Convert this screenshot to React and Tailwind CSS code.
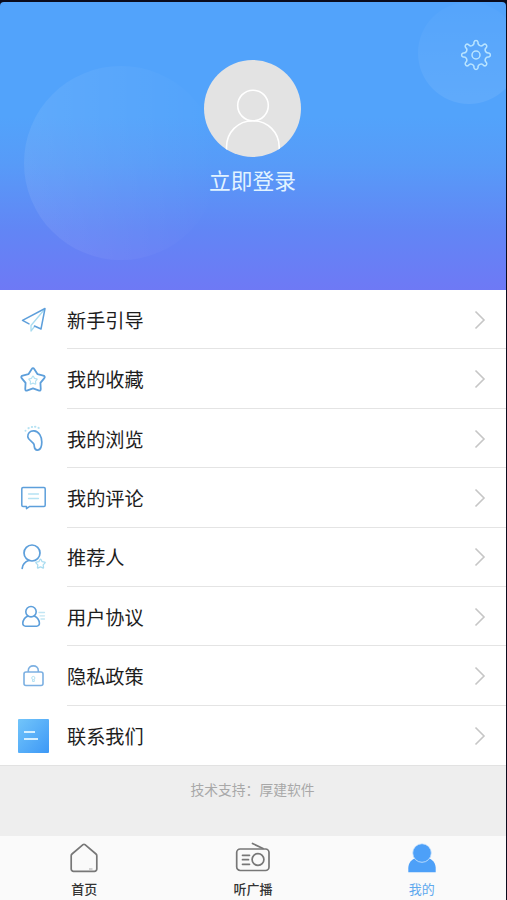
const polar = (cx, cy, r, deg) => {
  const a = ((deg - 90) * Math.PI) / 180;
  return [cx + r * Math.cos(a), cy + r * Math.sin(a)];
};

const mix = (a, b, t) => [a[0] + (b[0] - a[0]) * t, a[1] + (b[1] - a[1]) * t];
const pt = ([x, y]) => `${x.toFixed(2)} ${y.toFixed(2)}`;

// Five-pointed star with softened tips
const starPath = (cx, cy, outer, inner) => {
  let d = '';
  for (let i = 0; i < 5; i++) {
    const tip = polar(cx, cy, outer, i * 72);
    const prev = polar(cx, cy, inner, i * 72 - 36);
    const next = polar(cx, cy, inner, i * 72 + 36);
    d += `${i ? 'L' : 'M'}${pt(mix(tip, prev, 0.3))} Q${pt(tip)} ${pt(mix(tip, next, 0.3))} L${pt(next)} `;
  }
  return `${d}Z`;
};

// Gear with eight round teeth and scalloped gaps
const gearPath = (cx, cy, r) => {
  let d = `M${pt(polar(cx, cy, r, -9))} `;
  for (let i = 0; i < 8; i++) {
    d += `A2.1 2.1 0 0 1 ${pt(polar(cx, cy, r, i * 45 + 9))} `;
    d += `A3.1 3.1 0 0 0 ${pt(polar(cx, cy, r, i * 45 + 36))} `;
  }
  return `${d}Z`;
};

const GuideIcon = () => (
  <svg className="w-9 h-9" viewBox="0 0 36 36" fill="none" strokeLinejoin="round" strokeLinecap="round">
    <path d="M16 23.5V29l3.5-4.5M16 23.5L29 8" stroke="#a9dcf0" strokeWidth="1.3" />
    <path d="M14 21.8L7.5 18.4 30 6.5l-4 20.5-6.5-3" stroke="#5d9fdb" strokeWidth="1.5" />
  </svg>
);

const FavoriteIcon = () => (
  <svg className="w-9 h-9" viewBox="0 0 36 36" fill="none" strokeLinejoin="round">
    <path d={starPath(18, 18.5, 13.4, 7.8)} stroke="#5d9fdb" strokeWidth="1.8" />
    <path d={starPath(18, 18.5, 4.8, 2.6)} stroke="#b5e2f3" strokeWidth="1.2" />
  </svg>
);

const FootprintIcon = () => (
  <svg className="w-9 h-9" viewBox="0 0 36 36" fill="none" strokeLinecap="round">
    <path d="M19 9.9c-4-.3-6.6 2.6-6.2 5.9.4 3.6 5.2 4.7 6.2 7.8.6 2-.2 5.4 3.2 5.5 3.8.1 4.6-4.5 4.6-8.1 0-5.2-2.700-10.800-7.800-11.100z" stroke="#5d9fdb" strokeWidth="1.7" />
    <path d="M10.5 9.7v.1M13.5 7.2l.3-.2M16.8 5.900h.3M20 5.700h.4M23.500 6.800l.3.2" stroke="#b5e2f3" strokeWidth="2" />
  </svg>
);

const CommentIcon = () => (
  <svg className="w-9 h-9" viewBox="0 0 36 36" fill="none" strokeLinejoin="round" strokeLinecap="round">
    <path d="M8 7.5h21a1.2 1.2 0 0 1 1.2 1.2v16.500a1.2 1.2 0 0 1-1.2 1.2H14.7l-3.200 2.200v-2.200H8a1.2 1.2 0 0 1-1.2-1.2V8.7A1.2 1.2 0 0 1 8 7.5z" stroke="#5d9fdb" strokeWidth="1.5" />
    <path d="M13.5 14h10M13.5 18.5h10" stroke="#b5e2f3" strokeWidth="1.3" />
  </svg>
);

const RefereeIcon = () => (
  <svg className="w-9 h-9" viewBox="0 0 36 36" fill="none" strokeLinejoin="round" strokeLinecap="round">
    <circle cx="17" cy="13" r="8" stroke="#5d9fdb" strokeWidth="1.7" />
    <path d="M14 20.300c-3.800 1.400-6.400 3.800-6.800 8" stroke="#5d9fdb" strokeWidth="1.7" />
    <path d={starPath(25.5, 24, 5.4, 2.8)} stroke="#a9dcf0" strokeWidth="1.3" />
  </svg>
);

const AgreementIcon = () => (
  <svg className="w-9 h-9" viewBox="0 0 36 36" fill="none" strokeLinejoin="round" strokeLinecap="round">
    <circle cx="16" cy="12.7" r="5.2" stroke="#5d9fdb" strokeWidth="1.6" />
    <path d="M12.5 17.300c-2.600 1.300-4.400 3.600-4.700 6.700-.1 2 .9 3.200 2.800 3.200h11c1.900 0 2.900-1.200 2.800-3.200-.3-3.100-2.100-5.400-4.700-6.700" stroke="#5d9fdb" strokeWidth="1.6" />
    <path d="M24 13.500h5.500M25 16.800h4.500M26 20h3.500" stroke="#c2e6f4" strokeWidth="1.3" />
  </svg>
);

const PrivacyIcon = () => (
  <svg className="w-9 h-9" viewBox="0 0 36 36" fill="none">
    <rect x="9" y="14" width="19" height="13.500" rx="2" stroke="#7cb0e2" strokeWidth="1.6" />
    <path d="M13.300 14v-1.500c0-2.700 2.200-4.600 5-4.600s5 1.900 5 4.600V14" stroke="#7cb0e2" strokeWidth="1.6" />
    <circle cx="18.3" cy="20" r="1.6" stroke="#b5e2f3" />
    <path d="M17.500 21.500v2h1.800v-2" stroke="#b5e2f3" />
  </svg>
);

const ContactIcon = () => (
  <div className="w-[31px] h-[34px] mx-auto rounded-[1px] bg-gradient-to-br from-[#72c5fa] to-[#3d98f6] flex flex-col justify-center gap-[5px] pl-[6px]">
    <span className="w-[11px] h-[2px] bg-[#d5efff]" />
    <span className="w-[14px] h-[2px] bg-[#d5efff]" />
  </div>
);

const menuItems = [
  { label: '新手引导', Icon: GuideIcon },
  { label: '我的收藏', Icon: FavoriteIcon },
  { label: '我的浏览', Icon: FootprintIcon },
  { label: '我的评论', Icon: CommentIcon },
  { label: '推荐人', Icon: RefereeIcon },
  { label: '用户协议', Icon: AgreementIcon },
  { label: '隐私政策', Icon: PrivacyIcon },
  { label: '联系我们', Icon: ContactIcon },
];

const HomeIcon = () => (
  <svg className="w-9 h-8" viewBox="0 0 36 32" fill="none" stroke="#777" strokeWidth="1.7" strokeLinejoin="round">
    <path d="M17 2.700a1.6 1.6 0 0 1 2 0l11 9.300c.6.500.8 1 .8 1.800V27a2.300 2.300 0 0 1-2.300 2.300h-21A2.300 2.300 0 0 1 5.200 27V13.800c0-.8.2-1.300.8-1.800z" />
    <path d="M23 27h3.500" stroke="#aaa" strokeWidth="1" />
  </svg>
);

const RadioIcon = () => (
  <svg className="w-9 h-8" viewBox="0 0 36 32" fill="none" stroke="#777" strokeWidth="1.7" strokeLinecap="round">
    <rect x="1.7" y="7" width="32.3" height="21.5" rx="3.5" />
    <circle cx="23" cy="17.5" r="5.9" />
    <path d="M17.5 1.5L28 6.500M7.500 13.300h7M7.500 17.700h6M7.500 22.300h7" />
  </svg>
);

const MineIcon = () => (
  <svg className="w-9 h-8" viewBox="0 0 36 32" fill="#4da0f8">
    <path d="M10.5 16.5C6.500 18.300 4.300 22 4.300 26.500v3.700h27.400v-3.700c0-4.500-2.200-8.200-6.200-10z" />
    <circle cx="18" cy="11" r="9.3" stroke="#d3e9fd" strokeWidth=".8" />
  </svg>
);

const tabs = [
  { label: '首页', Icon: HomeIcon },
  { label: '听广播', Icon: RadioIcon },
  { label: '我的', Icon: MineIcon, active: true },
];

const Header = () => (
  <header className="relative h-[288px] shrink-0 overflow-hidden rounded-t-[4px] bg-[linear-gradient(180deg,#52a3fb_0%,#52a3fb_40%,#579bf8_56%,#6285f5_80%,#6e79f5_100%)]">
    <div className="absolute left-[24px] top-[64px] w-[194px] h-[194px] rounded-full bg-gradient-to-r from-white/8 to-white/0" />
    <div className="absolute left-[418px] top-0 w-[102px] h-[102px] rounded-full bg-gradient-to-b from-white/2 to-white/8" />
    <button className="absolute left-[460px] top-[37px]">
      <svg className="w-8 h-8" viewBox="0 0 32 32" fill="none" stroke="#b9e4ff" strokeWidth="1.5" strokeLinejoin="round">
        <path d={gearPath(16, 16, 13)} />
        <circle cx="16" cy="16" r="4" />
      </svg>
    </button>
    <div className="flex flex-col items-center pt-[58px] pr-px relative">
      <svg className="w-[97px] h-[97px] rounded-full bg-[#e3e3e3]" viewBox="0 0 97 97" fill="none" stroke="#fff" strokeWidth="1.6">
        <circle cx="49" cy="45.5" r="15.3" />
        <path d="M22.5 91v-4c0-14.500 11.500-26.300 26.300-26.300S75.200 72.500 75.200 87v4" />
      </svg>
      <span className="mt-[7px] text-[21.7px] leading-8 text-[#e2f3ff]">立即登录</span>
    </div>
  </header>
);

const App = () => {
  return (
    <div className="w-[507px] h-[900px] bg-[#0a0b1c] pt-[2px] pr-px overflow-hidden font-['Noto_Sans_CJK_SC',sans-serif]">
      <div className="h-full flex flex-col">
        <Header />

        <ul className="h-[475px] shrink-0 bg-white flex flex-col">
          {menuItems.map(({ label, Icon }) => (
            <li key={label} className="group flex-1 flex items-center pl-[15px]">
              <div className="w-9 shrink-0 pt-px">
                <Icon />
              </div>
              <div className="flex-1 h-full ml-4 flex items-center justify-between border-b border-[#e4e4e4] group-last:border-transparent pt-[1.5px] pr-[20px]">
                <span className="text-[19.2px] leading-7 text-[#1d1d1d]">{label}</span>
                <svg className="w-3 h-5" viewBox="0 0 12 20" fill="none" stroke="#c6c6c6" strokeWidth="1.6">
                  <path d="M1.500 1.500L10 10l-8.500 8.500" />
                </svg>
              </div>
            </li>
          ))}
        </ul>

        <div className="h-[71px] shrink-0 bg-[#eeeeee] border-t border-[#e2e2e2] pt-[13px] pr-px text-center text-[13.8px] leading-5 text-[#a8a8a8]">
          技术支持：厚建软件
        </div>

        <nav className="flex-1 bg-[#fafafa] grid grid-cols-3 pt-[6px]">
          {tabs.map(({ label, Icon, active }) => (
            <button key={label} className="flex flex-col items-center">
              <Icon />
              <span className={`mt-[5px] text-[13px] leading-5 ${active ? 'text-[#5fa9ee]' : 'text-[#333] font-medium'}`}>
                {label}
              </span>
            </button>
          ))}
        </nav>
      </div>
    </div>
  );
};

export default App;
